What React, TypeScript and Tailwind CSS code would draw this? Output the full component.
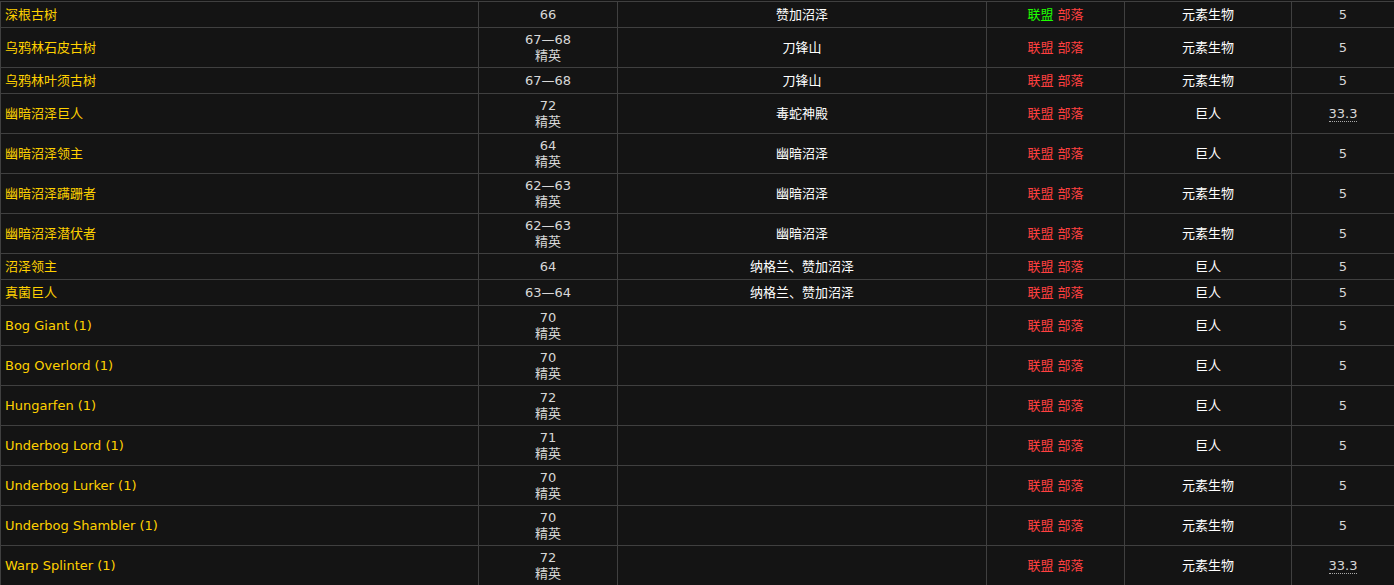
import React from "react";

type Row = {
  name: string;
  level: string;
  elite?: boolean;
  zone: string;
  allyGreen?: boolean;
  type: string;
  pct: string;
};

const rows: Row[] = [
  { name: "深根古树", level: "66", zone: "赞加沼泽", allyGreen: true, type: "元素生物", pct: "5" },
  { name: "乌鸦林石皮古树", level: "67—68", elite: true, zone: "刀锋山", type: "元素生物", pct: "5" },
  { name: "乌鸦林叶须古树", level: "67—68", zone: "刀锋山", type: "元素生物", pct: "5" },
  { name: "幽暗沼泽巨人", level: "72", elite: true, zone: "毒蛇神殿", type: "巨人", pct: "33.3" },
  { name: "幽暗沼泽领主", level: "64", elite: true, zone: "幽暗沼泽", type: "巨人", pct: "5" },
  { name: "幽暗沼泽蹒跚者", level: "62—63", elite: true, zone: "幽暗沼泽", type: "元素生物", pct: "5" },
  { name: "幽暗沼泽潜伏者", level: "62—63", elite: true, zone: "幽暗沼泽", type: "元素生物", pct: "5" },
  { name: "沼泽领主", level: "64", zone: "纳格兰、赞加沼泽", type: "巨人", pct: "5" },
  { name: "真菌巨人", level: "63—64", zone: "纳格兰、赞加沼泽", type: "巨人", pct: "5" },
  { name: "Bog Giant (1)", level: "70", elite: true, zone: "", type: "巨人", pct: "5" },
  { name: "Bog Overlord (1)", level: "70", elite: true, zone: "", type: "巨人", pct: "5" },
  { name: "Hungarfen (1)", level: "72", elite: true, zone: "", type: "巨人", pct: "5" },
  { name: "Underbog Lord (1)", level: "71", elite: true, zone: "", type: "巨人", pct: "5" },
  { name: "Underbog Lurker (1)", level: "70", elite: true, zone: "", type: "元素生物", pct: "5" },
  { name: "Underbog Shambler (1)", level: "70", elite: true, zone: "", type: "元素生物", pct: "5" },
  { name: "Warp Splinter (1)", level: "72", elite: true, zone: "", type: "元素生物", pct: "33.3" },
];

const cell = "border-l border-t border-[#404040] flex items-center";

export default function App() {
  return (
    <div
      className="w-[1394px] h-[585px] overflow-hidden bg-[#141414] pt-[1px] text-[13px] leading-[16px]"
      style={{ fontFamily: '"DejaVu Sans", "Noto Sans CJK SC", sans-serif' }}
    >
      {rows.map((r, i) => (
        <div key={i} className={`flex ${r.elite ? "h-[40px]" : "h-[26px]"}`}>
          <div className={`${cell} w-[478px] pl-[4px] text-[#ffd100]`}>{r.name}</div>
          <div className={`${cell} w-[139px] flex-col justify-center text-center text-[#d8d8d8]`}>
            <span>{r.level}</span>
            {r.elite && <span>精英</span>}
          </div>
          <div className={`${cell} w-[369px] justify-center text-white`}>{r.zone}</div>
          <div className={`${cell} w-[138px] justify-center`}>
            <span className={r.allyGreen ? "text-[#1eff00]" : "text-[#ff4040]"}>联盟</span>
            <span className="text-[#ff4040] ml-[4px]">部落</span>
          </div>
          <div className={`${cell} w-[167px] justify-center text-white`}>{r.type}</div>
          <div className={`${cell} flex-1 justify-center text-[#d8d8d8]`}>
            {r.pct === "33.3" ? (
              <span className="border-b border-dotted border-[#aaaaaa] leading-[15px]">{r.pct}</span>
            ) : (
              r.pct
            )}
          </div>
        </div>
      ))}
    </div>
  );
}
